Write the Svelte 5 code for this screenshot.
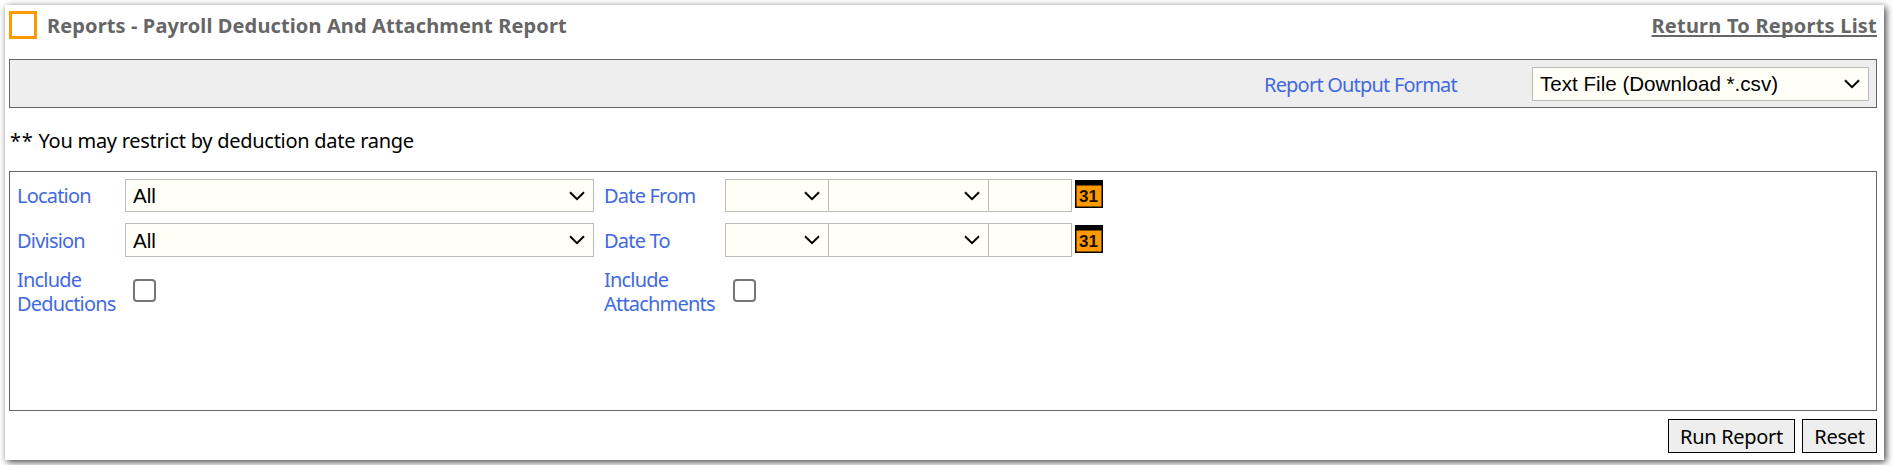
<script>
    const dateRows = ["Date From", "Date To"];
    const filters = ["Location", "Division"];
</script>

{#snippet dropdown(name, value)}
    <div class="dropdown {name}">
        <select aria-label={name}>
            <option>{value}</option>
        </select>
        <svg width="18" height="12" viewBox="0 0 18 12">
            <path d="M2 2.2 L9 9.2 L16 2.2" />
        </svg>
    </div>
{/snippet}

<div class="page">
    <header>
        <div class="square"></div>
        <h1>Reports - Payroll Deduction And Attachment Report</h1>
        <a href="#reports">Return To Reports List</a>
    </header>

    <div class="format-bar">
        <span class="label format-label">Report Output Format</span>
        {@render dropdown("format", "Text File (Download *.csv)")}
    </div>

    <p class="note"><span class="stars">**</span> You may restrict by deduction date range</p>

    <div class="filters">
        {#each filters as filter, i}
            <div class="row row-{i}">
                <span class="label">{filter}</span>
                {@render dropdown("wide", "All")}
                <span class="label">{dateRows[i]}</span>
                <div class="date">
                    {@render dropdown("day", "")}
                    {@render dropdown("month", "")}
                    <input class="year" type="text" aria-label="year" />
                    <svg class="calendar" width="28" height="28" viewBox="0 0 28 28">
                        <rect width="28" height="28" fill="#000" />
                        <rect x="1.5" y="5.5" width="25" height="21" fill="#f90" />
                        <text x="13.5" y="22" text-anchor="middle">31</text>
                    </svg>
                </div>
            </div>
        {/each}
        <div class="row checks">
            <span class="label">Include<br />Deductions</span>
            <input type="checkbox" aria-label="Include Deductions" />
            <span class="label">Include<br />Attachments</span>
            <input type="checkbox" aria-label="Include Attachments" />
        </div>
    </div>

    <footer>
        <button class="run">Run Report</button>
        <button class="reset">Reset</button>
    </footer>
</div>

<style>
    :global(body) {
        background: white;
        overflow: hidden;
    }

    .page {
        box-sizing: border-box;
        width: 1879px;
        height: 455px;
        margin: 5px;
        padding: 6px 7px 0 4px;
        background: white;
        box-shadow: 2px 2px 7px rgba(0, 0, 0, 0.75);

        font-family: "Noto Sans", sans-serif;
        font-size: 20px;
        line-height: 24px;
    }

    header {
        display: flex;
        align-items: center;
        height: 28px;
        color: #666;
    }

    .square {
        box-sizing: border-box;
        width: 28px;
        height: 28px;
        border: 3px solid #f90;
    }

    h1 {
        flex: 1;
        margin: 0 0 0 10px;
        padding-top: 2px;
        font-size: 20px;
        font-weight: bold;
        letter-spacing: 0.12px;
    }

    header a {
        padding-top: 2px;
        color: #666;
        font-weight: bold;
        letter-spacing: 0.22px;
        text-decoration-thickness: 2px;
        text-underline-offset: 2px;
        text-decoration-skip-ink: none;
    }

    .format-bar {
        box-sizing: border-box;
        display: flex;
        justify-content: flex-end;
        align-items: center;
        height: 49px;
        margin-top: 20px;
        padding-right: 7px;
        border: 1px solid #666;
        background: #eee;
    }

    .label {
        color: #4169e1;
        letter-spacing: -0.8px;
    }

    .format-label {
        width: 268px;
        padding-top: 2px;
    }

    .dropdown {
        display: grid;
        align-items: center;
    }

    .dropdown select,
    .dropdown svg {
        grid-area: 1 / 1;
    }

    .dropdown svg {
        justify-self: end;
        margin-right: 8.5px;
        fill: none;
        stroke: black;
        stroke-width: 2;
        pointer-events: none;
    }

    select,
    .year {
        appearance: none;
        box-sizing: border-box;
        width: 100%;
        height: 33px;
        margin: 0;
        padding: 0 7px;
        border: 1px solid #bbb;
        border-radius: 0;
        background: #fffff7;
        color: black;
        font-family: "Liberation Sans", Arial, sans-serif;
        font-size: 20.6px;
    }

    .format {
        width: 337px;
    }

    .format select {
        height: 34px;
    }

    .note {
        margin: 20px 0 0;
        height: 42px;
        padding: 1px 0 0 1px;
        line-height: 24px;
        letter-spacing: -0.27px;
    }

    .stars {
        letter-spacing: 0.8px;
    }

    .filters {
        box-sizing: border-box;
        height: 240px;
        padding: 7px 0 0 7px;
        border: 1px solid #666;
    }

    .row {
        display: grid;
        grid-template-columns: 108px 479px 121px auto;
        align-items: center;
        height: 33px;
    }

    .row-1 {
        height: 34px;
        margin-top: 11px;
    }

    .row-1 .label {
        padding-top: 2px;
    }

    .row-1 select,
    .row-1 .year {
        height: 34px;
    }

    .wide {
        width: 469px;
    }

    .date {
        display: flex;
    }

    .day {
        width: 104px;
    }

    .month {
        width: 161px;
        margin-left: -1px;
    }

    .year {
        width: 84px;
        margin-left: -1px;
    }

    .calendar {
        margin: 1px 0 0 3px;
    }

    .row-1 .calendar {
        margin-top: 2px;
    }

    .calendar text {
        fill: #1a1000;
        font: bold 17px "Liberation Sans", Arial, sans-serif;
    }

    .checks {
        height: 48px;
        margin-top: 11px;
    }

    .checks input {
        appearance: none;
        box-sizing: border-box;
        width: 23px;
        height: 23px;
        margin: 0 0 3px 8px;
        border: 2px solid #767676;
        border-radius: 4px;
        background: white;
    }

    footer {
        display: flex;
        justify-content: flex-end;
        gap: 7px;
        margin-top: 8px;
    }

    button {
        box-sizing: border-box;
        height: 34px;
        padding: 0;
        border: 1px solid black;
        border-radius: 0;
        background: #eee;
        color: black;
        font-family: inherit;
        font-size: 20px;
        letter-spacing: -0.3px;
    }

    .run {
        width: 127px;
    }

    .reset {
        width: 75px;
    }
</style>
